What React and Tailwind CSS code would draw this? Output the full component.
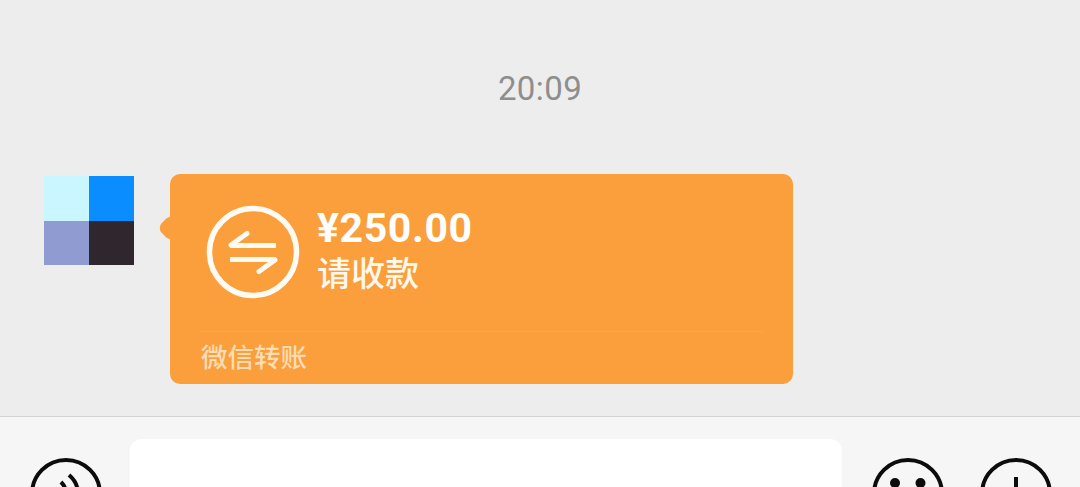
const cjk = { fontFamily: '"Roboto","Noto Sans CJK SC",sans-serif' };

function Transfer() {
  return (
    <svg width="94" height="94" viewBox="0 0 94 94" fill="none" className="shrink-0">
      <circle cx="47" cy="47" r="43.5" stroke="#fffaf2" strokeWidth="5.5" />
      <path d="M24 40.5H70" stroke="#fffaf2" strokeWidth="5" />
      <path d="M25 40 L41 28.5" stroke="#fffaf2" strokeWidth="5" strokeLinecap="round" />
      <path d="M24 54.5H70" stroke="#fffaf2" strokeWidth="5" />
      <path d="M69 55 L53 66.5" stroke="#fffaf2" strokeWidth="5" strokeLinecap="round" />
    </svg>
  );
}

function Voice() {
  return (
    <svg width="76" height="76" viewBox="0 0 76 76" fill="none" className="shrink-0">
      <circle cx="38" cy="38" r="34" stroke="#0c0c0c" strokeWidth="4" />
      <path d="M33 26 C36 29 38 33 38 38" stroke="#0c0c0c" strokeWidth="4" />
      <path d="M41 19 C47 24 50 30 50 38" stroke="#0c0c0c" strokeWidth="4" />
    </svg>
  );
}

function Smile() {
  return (
    <svg width="76" height="76" viewBox="0 0 76 76" fill="none" className="shrink-0">
      <circle cx="38" cy="38" r="34" stroke="#0c0c0c" strokeWidth="4" />
      <circle cx="25" cy="27" r="5" fill="#0c0c0c" />
      <circle cx="50.5" cy="27" r="5" fill="#0c0c0c" />
    </svg>
  );
}

function Plus() {
  return (
    <svg width="76" height="76" viewBox="0 0 76 76" fill="none" className="shrink-0">
      <circle cx="38" cy="38" r="34" stroke="#0c0c0c" strokeWidth="4" />
      <path d="M38 21V55M21 38H55" stroke="#0c0c0c" strokeWidth="4" />
    </svg>
  );
}

export default function App() {
  return (
    <div className="flex h-[487px] w-[1080px] flex-col overflow-hidden bg-[#ededed]" style={cjk}>
      <div className="flex h-[416px] shrink-0 flex-col">
        <div className="pt-[69px] text-center text-[33px] leading-[40px] tracking-[0.4px] text-[#8e8e8e]">20:09</div>
        <div className="mt-[65px] flex items-start pl-[44px]">
          <div className="mt-[2px] grid h-[89px] w-[90px] shrink-0 grid-cols-2 grid-rows-2">
            <div className="bg-[#c9f6ff]" />
            <div className="bg-[#0a8dff]" />
            <div className="bg-[#8f9bd1]" />
            <div className="bg-[#2f272d]" />
          </div>
          <div className="relative ml-[36px] flex h-[210px] w-[623px] flex-col rounded-[10px] bg-[#fb9e3c]">
            <div className="absolute left-[-9px] top-[44px] h-[20px] w-[20px] rotate-45 rounded-[7px] bg-[#fb9e3c]" />
            <div className="relative flex items-center pl-[36px] pt-[31px]">
              <Transfer />
              <div className="ml-[17px] -mt-[4px] flex flex-col text-white">
                <div className="text-[41px] font-bold leading-[46px] tracking-[0.6px]">¥250.00</div>
                <div className="mt-[1px] text-[34px] font-medium leading-[44px] text-[#fff8ee]">请收款</div>
              </div>
            </div>
            <div className="mx-[30px] mt-[32px] h-px bg-[#fda647]" />
            <div className="pl-[31px] pt-[8px] text-[26.5px] font-medium leading-[36px] text-[#fcdcb4]">微信转账</div>
          </div>
        </div>
      </div>
      <div className="flex min-h-0 flex-1 items-start border-t border-[#d4d4d4] bg-[#f6f6f6] pl-[28px] pt-[39px]">
        <Voice />
        <div className="ml-[26px] -mt-[17px] h-[100px] w-[712px] shrink-0 rounded-[12px] bg-white" />
        <div className="ml-[28px]"><Smile /></div>
        <div className="ml-[32px]"><Plus /></div>
      </div>
    </div>
  );
}
